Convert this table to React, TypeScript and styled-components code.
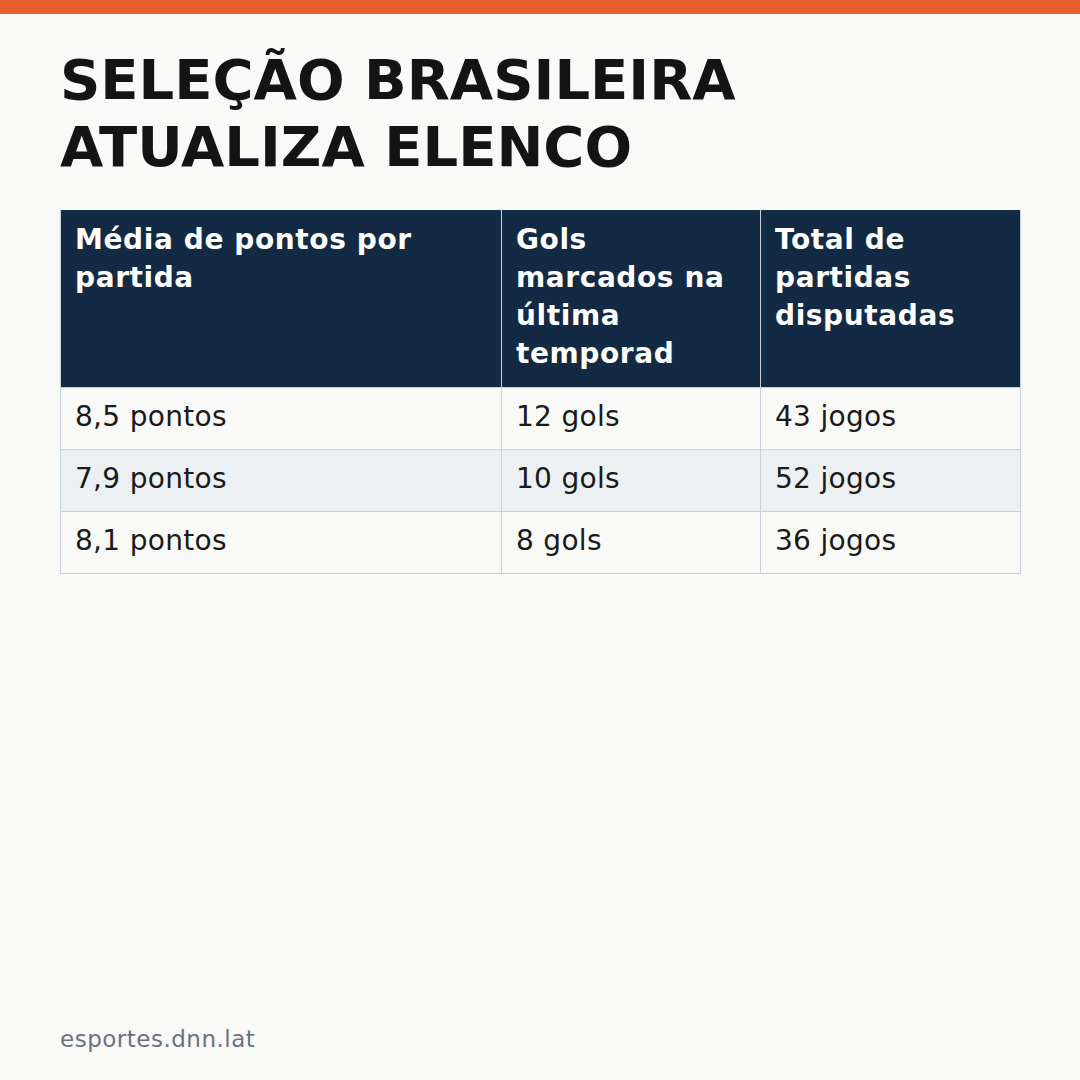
import React from "react";
import styled, { createGlobalStyle } from "styled-components";

const Global = createGlobalStyle`
  html, body { margin: 0; padding: 0; background: #F9F9F7; }
  body { font-family: "DejaVu Sans", "Liberation Sans", sans-serif; }
`;

const Page = styled.div`
  width: 1080px;
  height: 1080px;
  display: flex;
  flex-direction: column;
  background: #F9F9F7;
  box-sizing: border-box;
`;

const TopBar = styled.div`
  height: 14px;
  background: #E85D2E;
  flex-shrink: 0;
`;

const Content = styled.main`
  flex: 1;
  display: flex;
  flex-direction: column;
  padding: 32px 60px 28px;
`;

const Title = styled.h1`
  margin: 0 0 30px;
  font-family: "DejaVu Sans", sans-serif;
  font-weight: 700;
  font-size: 56px;
  line-height: 1.2;
  color: #141414;
  max-width: 760px;
`;

const Table = styled.table`
  width: 960px;
  border-collapse: collapse;
  table-layout: fixed;
  font-family: "DejaVu Sans", sans-serif;
`;

const HeadCell = styled.th<{ $w: number }>`
  box-sizing: border-box;
  width: ${(p) => p.$w}px;
  background: #132A45;
  color: #FFFFFF;
  font-weight: 700;
  font-size: 28px;
  line-height: 38px;
  letter-spacing: 0.6px;
  text-align: left;
  vertical-align: top;
  padding: 11px 14px 14px;
  border: 1px solid #C6D0DC;
  border-top: none;
`;

const Row = styled.tr<{ $alt: boolean }>`
  background: ${(p) => (p.$alt ? "#ECF0F3" : "#F9F9F7")};
`;

const Cell = styled.td`
  box-sizing: border-box;
  color: #1A1A1A;
  font-size: 28px;
  line-height: 33px;
  letter-spacing: 0.3px;
  padding: 12px 14px 16px;
  border: 1px solid #C6D0DC;
  vertical-align: top;
`;

const Footer = styled.footer`
  margin-top: auto;
  font-family: "DejaVu Sans", sans-serif;
  font-size: 23px;
  letter-spacing: 0.5px;
  color: #6B7280;
`;

const rows = [
  ["8,5 pontos", "12 gols", "43 jogos"],
  ["7,9 pontos", "10 gols", "52 jogos"],
  ["8,1 pontos", "8 gols", "36 jogos"],
];

export default function App() {
  return (
    <Page>
      <Global />
      <TopBar />
      <Content>
        <Title>SELEÇÃO BRASILEIRA ATUALIZA ELENCO</Title>
        <Table>
          <thead>
            <tr>
              <HeadCell $w={441}>Média de pontos por partida</HeadCell>
              <HeadCell $w={259}>Gols marcados na última temporad</HeadCell>
              <HeadCell $w={260}>Total de partidas disputadas</HeadCell>
            </tr>
          </thead>
          <tbody>
            {rows.map((r, i) => (
              <Row key={i} $alt={i % 2 === 1}>
                {r.map((c, j) => (
                  <Cell key={j}>{c}</Cell>
                ))}
              </Row>
            ))}
          </tbody>
        </Table>
        <Footer>esportes.dnn.lat</Footer>
      </Content>
    </Page>
  );
}
